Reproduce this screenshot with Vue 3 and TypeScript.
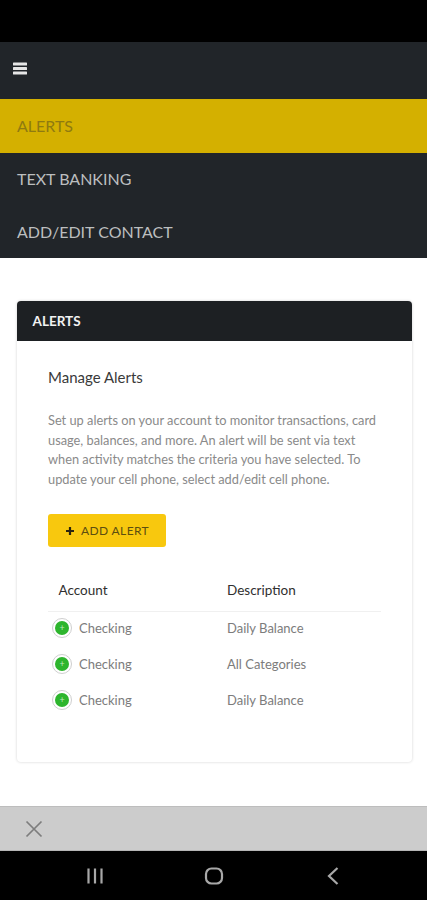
<script setup lang="ts">
const navItems = [
  { label: 'ALERTS', active: true },
  { label: 'TEXT BANKING', active: false },
  { label: 'ADD/EDIT CONTACT', active: false },
]
const rows = [
  { account: 'Checking', description: 'Daily Balance' },
  { account: 'Checking', description: 'All Categories' },
  { account: 'Checking', description: 'Daily Balance' },
]
</script>

<template>
  <div class="screen">
    <div class="status"></div>
    <header class="topbar">
      <svg class="burger" width="14" height="13" viewBox="0 0 14 13" aria-hidden="true">
        <rect x="0" y="0.5" width="14" height="3" rx="0.6" />
        <rect x="0" y="5" width="14" height="3" rx="0.6" />
        <rect x="0" y="9.5" width="14" height="3" rx="0.6" />
      </svg>
    </header>
    <nav class="nav">
      <div v-for="item in navItems" :key="item.label" class="nav-item" :class="{ active: item.active }">{{ item.label }}</div>
    </nav>
    <main class="content">
      <section class="card">
        <div class="card-head">ALERTS</div>
        <div class="card-body">
          <h2 class="title">Manage Alerts</h2>
          <p class="desc">Set up alerts on your account to monitor transactions, card usage, balances, and more. An alert will be sent via text when activity matches the criteria you have selected. To update your cell phone, select add/edit cell phone.</p>
          <button class="add" type="button">
            <svg width="10" height="10" viewBox="0 0 10 10" aria-hidden="true"><path d="M5 1v8M1 5h8" stroke="#2a2410" stroke-width="2.2" /></svg>
            <span>ADD ALERT</span>
          </button>
          <div class="table">
            <div class="row head">
              <div class="col-a">Account</div>
              <div class="col-b">Description</div>
            </div>
            <div v-for="(row, i) in rows" :key="i" class="row item">
              <div class="col-a acct">
                <span class="dot"><span class="dot-in">+</span></span>
                <span>{{ row.account }}</span>
              </div>
              <div class="col-b">{{ row.description }}</div>
            </div>
          </div>
        </div>
      </section>
    </main>
    <div class="dismiss">
      <svg width="18" height="18" viewBox="0 0 18 18" aria-hidden="true"><path d="M1.5 1.5l15 15M16.5 1.5l-15 15" stroke="#7d7d7d" stroke-width="1.7" fill="none" /></svg>
    </div>
    <div class="sysnav">
      <svg width="18" height="18" viewBox="0 0 18 18" aria-hidden="true"><path d="M2.5 1.5v15M9 1.5v15M15.5 1.5v15" stroke="#a8a8a8" stroke-width="2.2" fill="none" /></svg>
      <svg class="home" width="20" height="20" viewBox="0 0 20 20" aria-hidden="true"><rect x="2" y="2.5" width="16" height="15" rx="5.5" stroke="#a8a8a8" stroke-width="2.2" fill="none" /></svg>
      <svg width="14" height="20" viewBox="0 0 14 20" aria-hidden="true"><path d="M11.5 2L3 10l8.5 8" stroke="#a8a8a8" stroke-width="2.2" fill="none" /></svg>
    </div>
  </div>
</template>

<style>
html, body { margin: 0; padding: 0; background: #fff; }
</style>

<style scoped>
.screen {
  width: 427px;
  height: 900px;
  display: flex;
  flex-direction: column;
  overflow: hidden;
  font-family: Lato, "Open Sans", sans-serif;
  background: #fff;
}
.status { height: 42px; background: #000; flex: none; }
.topbar {
  height: 57px;
  flex: none;
  background: #212529;
  display: flex;
  align-items: center;
  padding: 0 0 5px 13px;
  box-sizing: border-box;
}
.burger { fill: #e6e6e6; }
.nav { background: #212529; flex: none; }
.nav-item {
  height: 53px;
  display: flex;
  align-items: center;
  padding: 0 0 2px 17px;
  box-sizing: border-box;
  font-size: 16px;
  color: #bcbebf;
}
.nav-item:last-child { height: 52px; }
.nav-item.active { height: 54px; background: #d4b000; color: #8f7a10; }
.content { flex: 1; padding: 43px 15px 0 17px; }
.card {
  height: 461px;
  box-sizing: border-box;
  border-radius: 4px;
  box-shadow: 0 0 3px rgba(0, 0, 0, 0.18);
  background: #fff;
}
.card-head {
  height: 40px;
  background: #1d2023;
  color: #f2f2f2;
  border-radius: 4px 4px 0 0;
  font-size: 13.5px;
  font-weight: 700;
  display: flex;
  align-items: center;
  padding: 0 0 0 15.5px;
  box-sizing: border-box;
}
.card-body { padding: 26px 31px 0; }
.title {
  margin: 0;
  font-size: 15px;
  line-height: 20px;
  font-weight: 400;
  color: #3a3a3a;
}
.desc {
  margin: 24px 0 0;
  font-size: 12.8px;
  line-height: 19.5px;
  color: #8a8a8a;
}
.add {
  margin-top: 25px;
  width: 118px;
  height: 33px;
  border: 0;
  border-radius: 3px;
  background: #f8c80e;
  display: flex;
  align-items: center;
  justify-content: center;
  gap: 6px;
  padding: 0;
  font-family: inherit;
  font-size: 12px;
  letter-spacing: 0.4px;
  color: #5c4e10;
}
.table { margin-top: 23px; }
.row { display: flex; }
.head {
  height: 42px;
  padding-bottom: 2px;
  align-items: center;
  font-size: 13.5px;
  color: #2f2f2f;
  border-bottom: 1px solid #f0f0f0;
  box-sizing: border-box;
}
.item {
  height: 36px;
  padding-bottom: 4px;
  box-sizing: border-box;
  align-items: center;
  font-size: 13px;
  color: #7c7c7c;
}
.col-a { width: 179px; padding-left: 10.5px; box-sizing: border-box; }
.col-b { flex: 1; }
.acct { display: flex; align-items: center; gap: 7px; padding-left: 4px; }
.dot {
  width: 20px;
  height: 20px;
  box-sizing: border-box;
  border-radius: 50%;
  border: 1px solid #cfcfcf;
  background: #fff;
  display: flex;
  align-items: center;
  justify-content: center;
}
.dot-in {
  width: 14px;
  height: 14px;
  border-radius: 50%;
  background: #2db52d;
  color: #bfe8bf;
  font-size: 9px;
  line-height: 14px;
  text-align: center;
}
.dismiss {
  height: 45px;
  flex: none;
  background: #cccccc;
  box-sizing: border-box;
  border-top: 1px solid #bdbdbd;
  border-bottom: 1px solid #b5b5b5;
  display: flex;
  align-items: center;
  padding-left: 25px;
}
.sysnav {
  height: 49px;
  flex: none;
  background: #000;
  display: flex;
  align-items: center;
  justify-content: space-between;
  padding: 0 87px 0 86px;
}
.home { margin-right: 3px; }
</style>
